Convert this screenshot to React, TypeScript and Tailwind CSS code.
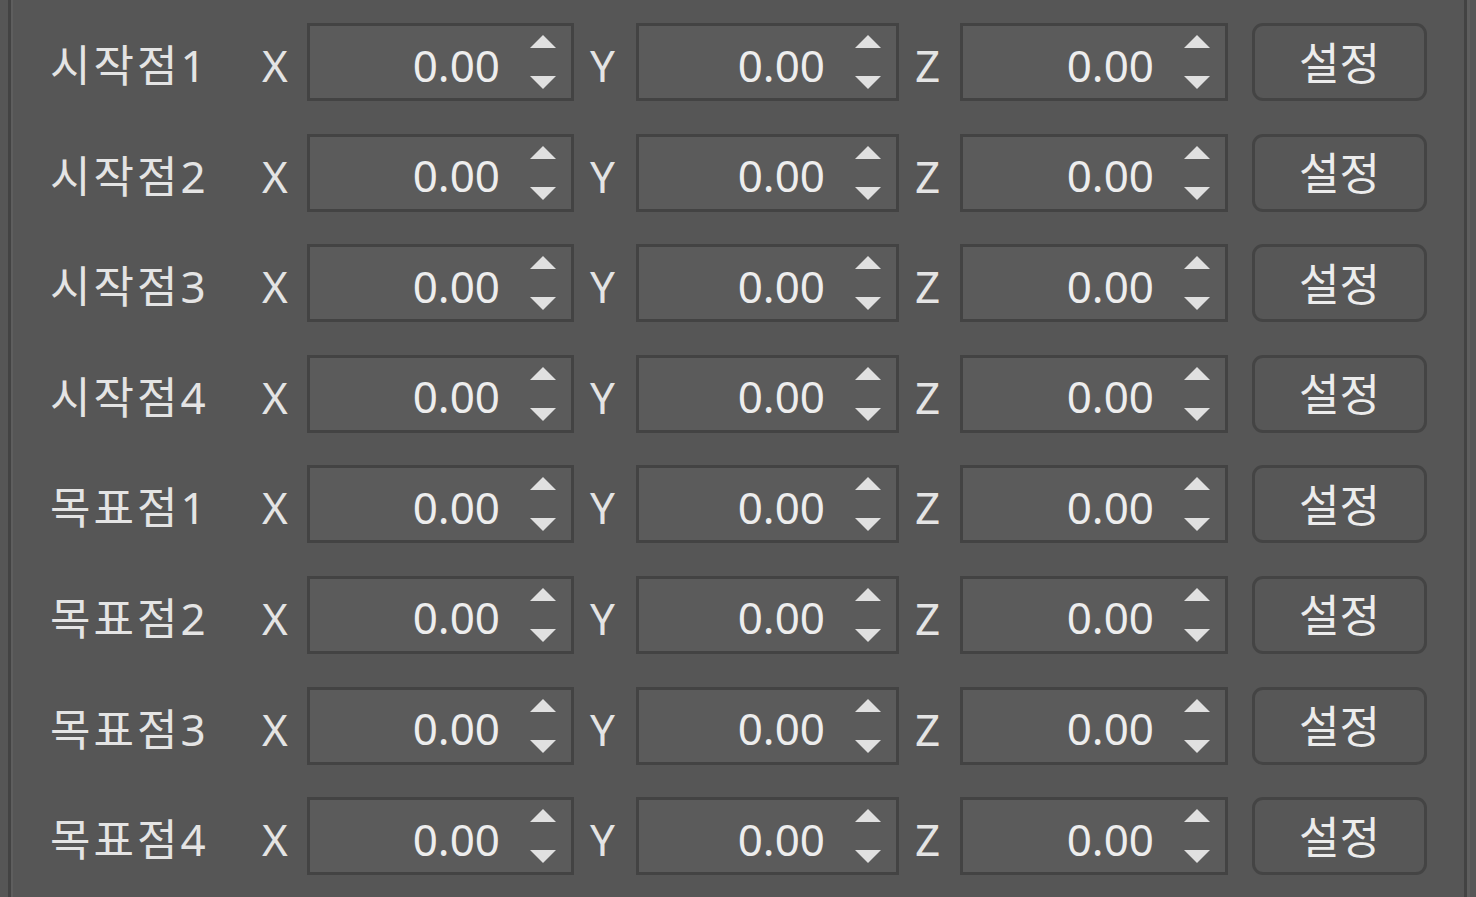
import React from 'react';

const rows = ['시작점1', '시작점2', '시작점3', '시작점4', '목표점1', '목표점2', '목표점3', '목표점4'];

function Arrows() {
  return (
    <div className="flex flex-col items-center justify-between h-[56px] w-[30px] mr-[13px]">
      <svg width="28" height="15" viewBox="0 0 28 15">
        <polygon points="14,1 27,14 1,14" fill="#e0e0e0" />
      </svg>
      <svg width="28" height="15" viewBox="0 0 28 15">
        <polygon points="1,1 27,1 14,14" fill="#e0e0e0" />
      </svg>
    </div>
  );
}

function SpinBox({ width }: { width: string }) {
  return (
    <div className={`${width} h-[78px] flex items-center justify-end border-[3px] border-[#434343] bg-[#5b5b5b]`}>
      <span className="pt-[5px] mr-[28px] text-[#ededed]">0.00</span>
      <Arrows />
    </div>
  );
}

function Row({ label }: { label: string }) {
  return (
    <div className="flex items-center h-[78px]">
      <div className="w-[212px] pt-[6px] tracking-[3px]">{label}</div>
      <div className="w-[45px] pt-[6px]">X</div>
      <SpinBox width="w-[267px]" />
      <div className="w-[62px] pl-[16px] pt-[6px]">Y</div>
      <SpinBox width="w-[263px]" />
      <div className="w-[61px] pl-[16px] pt-[6px]">Z</div>
      <SpinBox width="w-[268px]" />
      <button className="ml-[24px] w-[175px] h-[78px] rounded-[11px] border-[3px] border-[#444444] bg-[#575757] text-[#ececec] flex items-center justify-center pt-[1px]">
        설정
      </button>
    </div>
  );
}

export default function App() {
  return (
    <div
      className="w-[1476px] h-[897px] bg-[#565656] overflow-hidden flex text-[44px] text-[#e4e4e4] leading-none"
      style={{ fontFamily: '"Noto Sans", "Noto Sans CJK KR", sans-serif' }}
    >
      <div className="w-[8px] bg-[#565656]" />
      <div className="w-[3px] bg-[#434343]" />
      <div className="w-[2px] bg-[#5e5e5e]" />
      <div className="flex-1 flex flex-col pt-[23px] gap-[32.6px] pl-[37px]">
        {rows.map((r) => (
          <Row key={r} label={r} />
        ))}
      </div>
      <div className="w-[3px] bg-[#434343]" />
      <div className="w-[3px] bg-[#5e5e5e]" />
      <div className="w-[6px] bg-[#565656]" />
    </div>
  );
}
